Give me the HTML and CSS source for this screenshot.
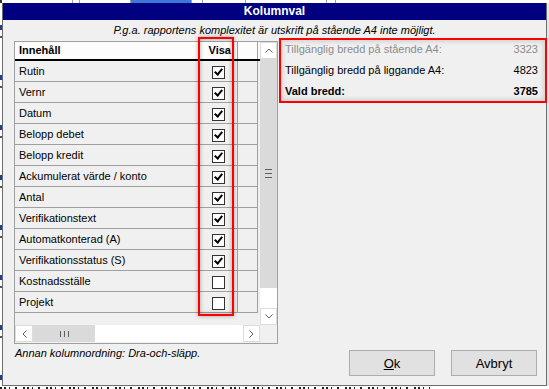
FILE: index.html
```html
<!DOCTYPE html>
<html lang="sv">
<head>
  <meta charset="UTF-8">
  <title>Kolumnval</title>
  <link rel="stylesheet" href="styles.css">
</head>
<body>

<div class="topstrip">
  <span class="seg dark" style="width:2px"></span>
  <span class="seg" style="width:70px"></span>
  <span class="seg" style="width:6px"></span>
  <span class="seg" style="width:50px"></span>
  <span class="seg blue" style="width:60px"></span>
  <span class="seg" style="width:10px"></span>
  <span class="seg" style="width:42px"></span>
  <span class="seg" style="width:80px"></span>
  <span class="seg" style="width:8px"></span>
</div>

<div class="middle">
  <div class="leftstrip"></div>

  <div class="dialog">
    <div class="titlebar">Kolumnval</div>
    <div class="subtitle">P.g.a. rapportens komplexitet är utskrift på stående A4 inte möjligt.</div>

    <div class="content">
      <div class="leftcol">
        <div class="gridbox">
          <div class="gridmain">
            <div class="gridbody">
              <div class="row head">
                <div class="c-name">Innehåll</div>
                <div class="c-show">Visa</div>
                <div class="c-fill"></div>
              </div>
              <div class="row"><div class="c-name">Rutin</div><div class="c-show"><span class="chk on"></span></div><div class="c-fill"></div></div>
              <div class="row"><div class="c-name">Vernr</div><div class="c-show"><span class="chk on"></span></div><div class="c-fill"></div></div>
              <div class="row"><div class="c-name">Datum</div><div class="c-show"><span class="chk on"></span></div><div class="c-fill"></div></div>
              <div class="row"><div class="c-name">Belopp debet</div><div class="c-show"><span class="chk on"></span></div><div class="c-fill"></div></div>
              <div class="row"><div class="c-name">Belopp kredit</div><div class="c-show"><span class="chk on"></span></div><div class="c-fill"></div></div>
              <div class="row"><div class="c-name">Ackumulerat värde / konto</div><div class="c-show"><span class="chk on"></span></div><div class="c-fill"></div></div>
              <div class="row"><div class="c-name">Antal</div><div class="c-show"><span class="chk on"></span></div><div class="c-fill"></div></div>
              <div class="row"><div class="c-name">Verifikationstext</div><div class="c-show"><span class="chk on"></span></div><div class="c-fill"></div></div>
              <div class="row"><div class="c-name">Automatkonterad (A)</div><div class="c-show"><span class="chk on"></span></div><div class="c-fill"></div></div>
              <div class="row"><div class="c-name">Verifikationsstatus (S)</div><div class="c-show"><span class="chk on"></span></div><div class="c-fill"></div></div>
              <div class="row"><div class="c-name">Kostnadsställe</div><div class="c-show"><span class="chk"></span></div><div class="c-fill"></div></div>
              <div class="row"><div class="c-name">Projekt</div><div class="c-show"><span class="chk"></span></div><div class="c-fill"></div></div>
            </div>

            <div class="hscroll">
              <div class="arrow">
                <svg width="5" height="8" viewBox="0 0 5 8"><polyline points="4.5,0.5 1,4 4.5,7.5" fill="none" stroke="#606060" stroke-width="1"/></svg>
              </div>
              <div class="thumb h"><i></i><i></i><i></i></div>
              <div class="track"></div>
              <div class="arrow">
                <svg width="5" height="8" viewBox="0 0 5 8"><polyline points="0.5,0.5 4,4 0.5,7.5" fill="none" stroke="#606060" stroke-width="1"/></svg>
              </div>
            </div>
          </div>

          <div class="vscroll">
            <div class="arrow">
              <svg width="8" height="5" viewBox="0 0 8 5"><polyline points="0.5,4.5 4,1 7.5,4.5" fill="none" stroke="#606060" stroke-width="1"/></svg>
            </div>
            <div class="thumb v"><i></i><i></i><i></i></div>
            <div class="track"></div>
            <div class="arrow">
              <svg width="8" height="5" viewBox="0 0 8 5"><polyline points="0.5,0.5 4,4 7.5,0.5" fill="none" stroke="#606060" stroke-width="1"/></svg>
            </div>
          </div>

          <div class="mark"></div>
        </div>

        <div class="note">Annan kolumnordning: Dra-och-släpp.</div>
      </div>

      <div class="rightcol">
        <div class="info">
          <div class="inforow muted"><span>Tillgänglig bredd på stående A4:</span><span>3323</span></div>
          <div class="inforow"><span>Tillgänglig bredd på liggande A4:</span><span>4823</span></div>
          <div class="inforow bold"><span>Vald bredd:</span><span>3785</span></div>
        </div>

        <div class="buttons">
          <button><u>O</u>k</button>
          <button>Avbryt</button>
        </div>
      </div>
    </div>
  </div>

  <div class="rightstrip"></div>
</div>

<div class="bottomstrip"></div>

</body>
</html>
```

FILE: styles.css
```css
html, body {
  margin: 0;
  padding: 0;
}

body {
  width: 549px;
  height: 389px;
  overflow: hidden;
  background: #fff;
  font-family: "Liberation Sans", Arial, sans-serif;
  font-size: 11px;
  color: #000;
}

/* bits of the window behind the dialog */
.topstrip {
  height: 3px;
  display: flex;
  background: #fff;
}

.seg {
  height: 3px;
  border-right: 1px solid #a0a0a0;
}

.seg.dark {
  background: #333;
  border: none;
}

.seg.blue {
  background: #3c78d8;
}

.middle {
  display: flex;
  height: 383px;
}

.leftstrip {
  width: 2px;
  background: repeating-linear-gradient(to bottom, #fff 0 22px, #1f3f8f 22px 27px, #fff 27px 33px, #555 33px 35px, #fff 35px 50px);
}

.rightstrip {
  width: 2px;
  background: #e8e8e8;
}

.bottomstrip {
  height: 3px;
  margin-top: 1px;
  width: 430px;
  background: repeating-linear-gradient(90deg, #222 0 2px, #fff 2px 4px, #222 4px 6px, #fff 6px 9px, #222 9px 10px, #fff 10px 15px, #222 15px 17px, #fff 17px 23px);
}

/* dialog */
.dialog {
  width: 543px;
  height: 382px;
  background: #f0f0f0;
  border-left: 1px solid #6d6d6d;
  border-right: 1px solid #6d6d6d;
  border-bottom: 1px solid #6d6d6d;
  display: flex;
  flex-direction: column;
}

.titlebar {
  height: 17px;
  line-height: 17px;
  background: #000080;
  color: #fff;
  font-weight: bold;
  font-size: 12px;
  text-align: center;
}

.subtitle {
  height: 21px;
  line-height: 21px;
  font-style: italic;
  text-align: center;
}

.content {
  display: flex;
  flex: 1;
  padding-left: 11px;
}

.leftcol {
  width: 264px;
}

.gridbox {
  position: relative;
  display: flex;
  height: 301px;
  border: 1px solid #a0a0a0;
}

.gridmain {
  width: 245px;
  display: flex;
  flex-direction: column;
}

.gridbody {
  height: 283px;
  overflow: hidden;
  background: #f0f0f0;
}

.row {
  display: flex;
  height: 20px;
  line-height: 21px;
  border-bottom: 1px solid #a0a0a0;
  width: 243px;
}

.row > div {
  border-right: 1px solid #a0a0a0;
}

.c-name {
  width: 180px;
  padding-left: 4px;
  white-space: nowrap;
}

.c-show {
  width: 37px;
  display: flex;
  align-items: center;
  justify-content: center;
}

.c-fill {
  width: 19px;
}

.row.head {
  height: 17px;
  line-height: 17px;
  border-bottom: 2px solid #000;
  background: #fcfcfc;
  font-weight: bold;
  width: 245px;
}

.row.head .c-show {
  justify-content: flex-end;
  width: 31px;
  padding-right: 6px;
}

.chk {
  width: 11px;
  height: 11px;
  border: 1px solid #333;
  background: #fff;
  position: relative;
  top: 1px;
}

.chk.on::after {
  content: "";
  position: absolute;
  left: 3px;
  top: 0px;
  width: 3px;
  height: 6px;
  border-right: 2px solid #000;
  border-bottom: 2px solid #000;
  transform: rotate(40deg);
}

/* scrollbars */
.hscroll {
  display: flex;
  height: 17px;
  background: #fff;
}

.vscroll {
  display: flex;
  flex-direction: column;
  width: 17px;
  height: 283px;
  background: #fff;
}

.arrow {
  display: flex;
  align-items: center;
  justify-content: center;
  background: #fff;
  border: 1px solid #dcdcdc;
}

.hscroll .arrow {
  width: 15px;
  height: 15px;
}

.hscroll .arrow:first-child {
  width: 16px;
}

.vscroll .arrow {
  height: 15px;
  width: 15px;
}

.thumb {
  background: #dadada;
  display: flex;
  align-items: center;
  justify-content: center;
  gap: 1px;
}

.thumb i {
  background: #606060;
}

.thumb.h {
  width: 62px;
}

.thumb.h i {
  width: 1px;
  height: 6px;
  margin: 0 1px;
}

.thumb.v {
  height: 229px;
  flex-direction: column;
}

.thumb.v i {
  width: 7px;
  height: 1px;
  margin: 1px 0;
}

.track {
  flex: 1;
  background: #fff;
}

/* red highlight over the Visa column */
.mark {
  position: absolute;
  left: 183px;
  top: -5px;
  width: 32px;
  height: 275px;
  border: 2px solid #f00;
  box-shadow: 0 0 4px rgba(0, 0, 0, 0.35), inset 0 0 4px rgba(0, 0, 0, 0.35);
}

.note {
  margin-top: 3px;
  line-height: 13px;
  font-style: italic;
  padding-left: 1px;
}

.rightcol {
  width: 266px;
  margin-left: 2px;
  display: flex;
  flex-direction: column;
  justify-content: space-between;
  padding-bottom: 9px;
}

.info {
  margin-top: -2px;
  height: 63px;
  padding: 0 8px 0 5px;
  outline: 2px solid #f00;
  outline-offset: -1px;
  box-shadow: inset 0 0 4px 3px rgba(0, 0, 0, 0.12);
}

.inforow {
  display: flex;
  justify-content: space-between;
  height: 21px;
  line-height: 21px;
}

.inforow.muted {
  color: #8c8c8c;
}

.inforow.bold {
  font-weight: bold;
}

.buttons {
  display: flex;
  justify-content: flex-end;
  gap: 16px;
  padding-right: 9px;
}

button {
  width: 86px;
  height: 26px;
  border: 1px solid #adadad;
  background: #e1e1e1;
  font-family: "Liberation Sans", Arial, sans-serif;
  font-size: 13px;
  color: #000;
  padding: 0;
}
```
